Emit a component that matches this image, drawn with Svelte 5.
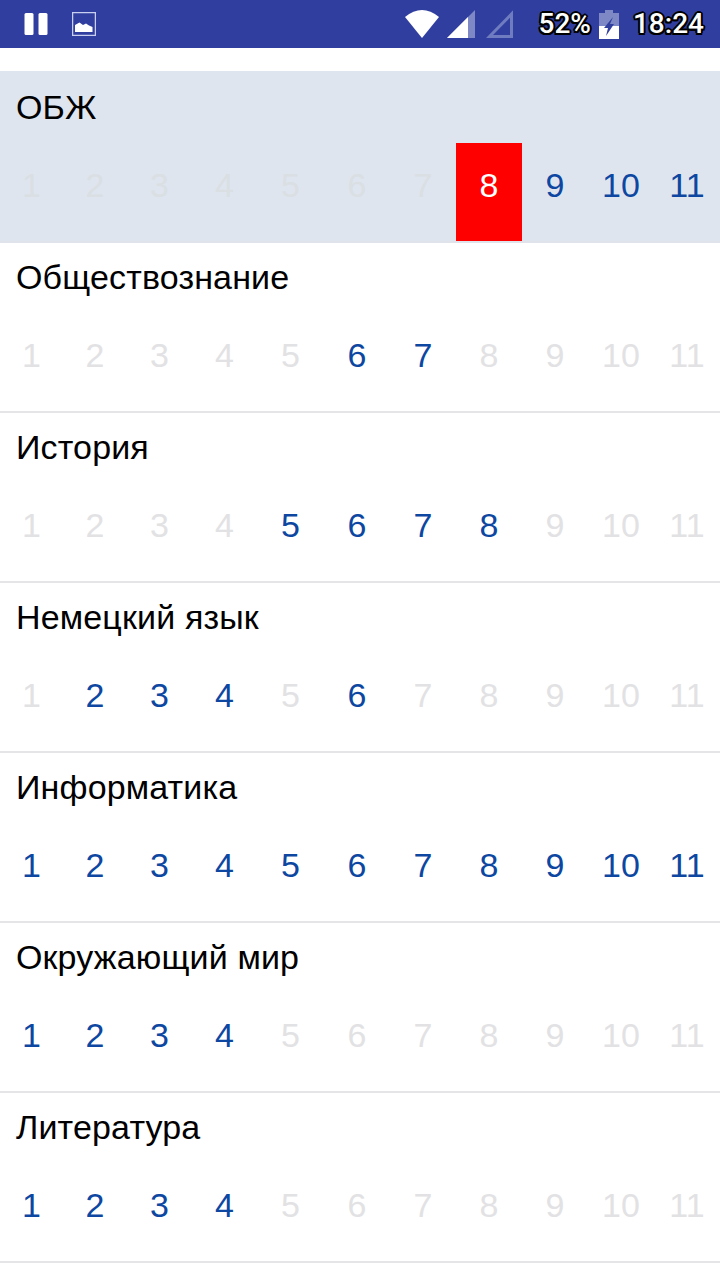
<script>
  const all = [1, 2, 3, 4, 5, 6, 7, 8, 9, 10, 11];
  const rows = [
    { name: 'ОБЖ', active: [9, 10, 11], selected: 8 },
    { name: 'Обществознание', active: [6, 7] },
    { name: 'История', active: [5, 6, 7, 8] },
    { name: 'Немецкий язык', active: [2, 3, 4, 6] },
    { name: 'Информатика', active: all },
    { name: 'Окружающий мир', active: [1, 2, 3, 4] },
    { name: 'Литература', active: [1, 2, 3, 4] }
  ];
</script>

<div class="status">
  <div class="left">
    <svg class="pause" viewBox="0 0 24 24" width="24" height="24"><rect x="0.5" y="1" width="9" height="22" rx="1.5" fill="#fff"/><rect x="14.5" y="1" width="9" height="22" rx="1.5" fill="#fff"/></svg>
    <svg class="pic" viewBox="0 0 24 24" width="24" height="24"><rect x="0.5" y="0.5" width="23" height="23" fill="none" stroke="#c8cff0" stroke-width="1.5"/><path d="M3 20V13L7.5 10.5L11 13L14 11.5L17 13.5L20.5 15V20Z" fill="#fff"/></svg>
  </div>
  <div class="right">
    <svg class="wifi" viewBox="0 0 34 28" width="34" height="28"><path d="M0 7Q17 -7 34 7L17 28Z" fill="#fff"/></svg>
    <svg class="sig" viewBox="0 0 28 28" width="28" height="28"><path d="M0 28L28 0V28Z" fill="#7d88c5"/><path d="M0 28L21 7V28Z" fill="#fff"/></svg>
    <svg class="sig2" viewBox="0 0 27 28" width="27" height="28"><path d="M3.5 26.5L25.5 4V26.5Z" fill="none" stroke="#6f7cc0" stroke-width="3"/></svg>
    <span class="stxt pct">52%</span>
    <svg class="batt" viewBox="0 0 20 29" width="20" height="29"><path d="M6 0H14V3H20V29H0V3H6Z" fill="#7d88c5"/><path d="M0 16H20V29H0Z" fill="#fff"/><path d="M14 7L5 18H9L7 26L15 14H11Z" fill="#303f9f"/></svg>
    <span class="stxt time">18:24</span>
  </div>
</div>

<div class="list">
  {#each rows as row, i}
    <section class="row" class:hl={i === 0}>
      <h2>{row.name}</h2>
      <div class="nums">
        {#each all as n}
          <span class="num" class:on={row.active.includes(n)} class:sel={row.selected === n}>{n}</span>
        {/each}
      </div>
    </section>
  {/each}
</div>

<style>
  :global(body) {
    margin: 0;
    background: #fff;
    font-family: "Liberation Sans", Arial, sans-serif;
  }
  .status {
    height: 48px;
    background: #303f9f;
    display: flex;
    align-items: center;
    justify-content: space-between;
    padding: 0 16px 0 24px;
  }
  .left, .right { display: flex; align-items: center; }
  .pic { margin-left: 24px; }
  .sig { margin-left: 8px; }
  .sig2 { margin-left: 11px; }
  .stxt {
    font-family: Roboto, sans-serif;
    font-weight: 500;
    font-size: 28px;
    line-height: 48px;
    color: #fff;
    text-shadow: -2px 0 0 #000, 2px 0 0 #000, 0 -2px 0 #000, 0 2px 0 #000, -1.5px -1.5px 0 #000, 1.5px -1.5px 0 #000, -1.5px 1.5px 0 #000, 1.5px 1.5px 0 #000;
  }
  .pct { margin-left: 26px; }
  .batt { margin-left: 8px; }
  .time { margin-left: 14px; }
  .list { padding-top: 23px; }
  .row {
    height: 170px;
    box-sizing: border-box;
    border-bottom: 2px solid #e5e5e7;
    display: flex;
    flex-direction: column;
  }
  .row.hl {
    height: 172px;
    padding-top: 2px;
    background: #dfe5ef;
    border-bottom-color: #e0e4ea;
  }
  h2 {
    margin: 0;
    height: 70px;
    padding-left: 16px;
    font-weight: 400;
    font-size: 34px;
    letter-spacing: 0.15px;
    line-height: 68px;
    color: #000;
  }
  .nums {
    display: grid;
    grid-template-columns: 63px 64px 65px 65px 67px 66px 66px 66px 66px 66px 66px;
    height: 98px;
  }
  .num {
    display: flex;
    align-items: center;
    justify-content: center;
    box-sizing: border-box;
    padding-bottom: 14px;
    font-size: 34px;
    color: #e2e2e4;
  }
  .hl .num { color: #d9dfe2; }
  .num.on, .hl .num.on { color: #0d47a1; }
  .num.sel, .hl .num.sel { background: #f00; color: #fff; }
</style>
